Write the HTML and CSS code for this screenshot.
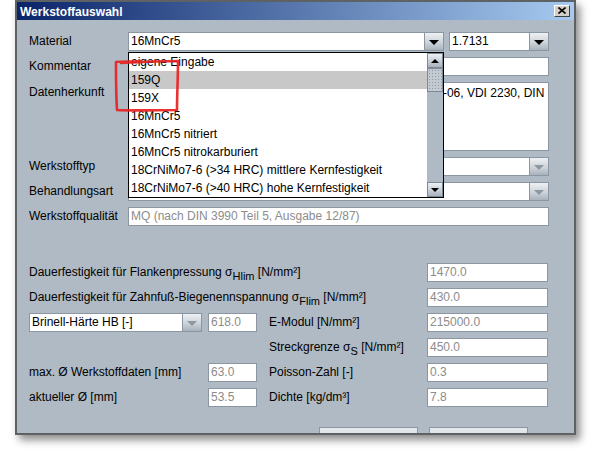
FILE: index.html
```html
<!DOCTYPE html>
<html>
<head>
<meta charset="utf-8">
<link rel="stylesheet" href="styles.css">
</head>
<body>
<div class="window">
  <div class="titlebar">
    <span class="title">Werkstoffauswahl</span>
    <span class="close"><svg width="8" height="7" viewBox="0 0 8 7"><path d="M0.5 0.5 L7.5 6.5 M7.5 0.5 L0.5 6.5" stroke="#000" stroke-width="1.6" fill="none"/></svg></span>
  </div>
  <div class="content">
    <div class="form-upper">
      <div class="lbl">Material</div>
      <div class="row-material">
        <div class="combo combo-main">
          <span class="combo-text">16MnCr5</span>
          <span class="arrow"><i class="tri"></i></span>
          <div class="popup">
            <div class="list">
              <div class="item">eigene Eingabe</div>
              <div class="item selected">159Q</div>
              <div class="item">159X</div>
              <div class="item">16MnCr5</div>
              <div class="item">16MnCr5 nitriert</div>
              <div class="item">16MnCr5 nitrokarburiert</div>
              <div class="item">18CrNiMo7-6 (&gt;34 HRC) mittlere Kernfestigkeit</div>
              <div class="item">18CrNiMo7-6 (&gt;40 HRC) hohe Kernfestigkeit</div>
            </div>
            <div class="scrollbar">
              <div class="sbtn"><i class="tri-up"></i></div>
              <div class="thumb"></div>
              <div class="track"></div>
              <div class="sbtn"><i class="tri-sm"></i></div>
            </div>
          </div>
        </div>
        <div class="combo combo-nr">
          <span class="combo-text">1.7131</span>
          <span class="arrow"><i class="tri"></i></span>
        </div>
      </div>

      <div class="lbl">Kommentar</div>
      <div class="field"></div>

      <div class="lbl lbl-top">Datenherkunft</div>
      <div class="field area">Niemann/Winter, FVA-Informationsblatt 54/17, Stand: 2008-06, VDI 2230, DIN 3990</div>

      <div class="lbl">Werkstofftyp</div>
      <div class="combo disabled">
        <span class="combo-text"></span>
        <span class="arrow"><i class="tri"></i></span>
      </div>

      <div class="lbl">Behandlungsart</div>
      <div class="combo disabled">
        <span class="combo-text"></span>
        <span class="arrow"><i class="tri"></i></span>
      </div>

      <div class="lbl">Werkstoffqualität</div>
      <div class="field dis">MQ (nach DIN 3990 Teil 5, Ausgabe 12/87)</div>
    </div>

    <div class="form-lower">
      <div class="lbl span3">Dauerfestigkeit für Flankenpressung σ<sub>Hlim</sub> [N/mm²]</div>
      <div class="field dis">1470.0</div>

      <div class="lbl span3">Dauerfestigkeit für Zahnfuß-Biegenennspannung σ<sub>Flim</sub> [N/mm²]</div>
      <div class="field dis">430.0</div>

      <div class="combo disabled hb">
        <span class="combo-text">Brinell-Härte HB [-]</span>
        <span class="arrow"><i class="tri"></i></span>
      </div>
      <div class="field dis small">618.0</div>
      <div class="lbl">E-Modul [N/mm²]</div>
      <div class="field dis">215000.0</div>

      <div class="lbl col3">Streckgrenze σ<sub>S</sub> [N/mm²]</div>
      <div class="field dis">450.0</div>

      <div class="lbl">max. Ø Werkstoffdaten [mm]</div>
      <div class="field dis small">63.0</div>
      <div class="lbl">Poisson-Zahl [-]</div>
      <div class="field dis">0.3</div>

      <div class="lbl">aktueller Ø [mm]</div>
      <div class="field dis small">53.5</div>
      <div class="lbl">Dichte [kg/dm³]</div>
      <div class="field dis">7.8</div>
    </div>

    <div class="buttons">
      <div class="btn"></div>
      <div class="btn"></div>
    </div>
  </div>
</div>
<svg class="annotation" width="590" height="451" viewBox="0 0 590 451">
  <path d="M121 63 C140 62 160 61 178 61 C178 78 177 95 177 110 C158 110 137 111 117 110 C116 94 116 78 116 62 C125 61 133 62 141 61" fill="none" stroke="#e8211f" stroke-width="2.6" stroke-linecap="round" stroke-linejoin="round" opacity="0.92"/>
</svg>
</body>
</html>
```

FILE: styles.css
```css
body {
  margin: 0;
  width: 590px;
  height: 451px;
  background: #ffffff;
  font-family: "Liberation Sans", Arial, sans-serif;
  font-size: 12px;
  color: #000;
  overflow: hidden;
}

.window {
  position: relative;
  margin-left: 15px;
  width: 561px;
  height: 435px;
  box-sizing: border-box;
  border: 2px solid #5f6264;
  background: #b0bac4;
  box-shadow: 4px 5px 8px rgba(0, 0, 0, 0.45);
  overflow: hidden;
}

.titlebar {
  height: 18px;
  background: linear-gradient(to right, #0a246a, #a6caf0);
  display: flex;
  align-items: center;
  justify-content: space-between;
  padding: 0 4px 0 3px;
}

.title {
  color: #ffffff;
  font-weight: bold;
  font-size: 12px;
  line-height: 18px;
  padding-top: 1px;
}

.close {
  width: 16px;
  height: 12px;
  box-sizing: border-box;
  background: #d4d0c8;
  border: 1px solid;
  border-color: #ffffff #404040 #404040 #ffffff;
  display: flex;
  align-items: center;
  justify-content: center;
  margin-top: -1px;
}

.close svg { display: block; }

.content {
  padding: 12px 25px 0 12px;
}

.lbl {
  line-height: 19px;
  white-space: nowrap;
}

.lbl sub {
  font-size: 11px;
  vertical-align: -4px;
  line-height: 0;
}

.form-upper {
  display: grid;
  grid-template-columns: 99px 1fr;
  grid-template-rows: 19px 19px 69px 19px 19px 19px;
  row-gap: 6px;
}

.lbl-top { line-height: 19px; padding-top: 1px; }

.row-material {
  display: flex;
  gap: 5px;
}

.field {
  box-sizing: border-box;
  height: 19px;
  border: 1px solid #8a96a2;
  background: #ffffff;
  padding: 0 2px;
  line-height: 17px;
  white-space: nowrap;
  overflow: hidden;
}

.field.dis { color: #8c8c8c; }

.field.area {
  height: 69px;
  white-space: normal;
  padding: 1px 1px 0 2px;
  line-height: 18px;
  color: #000;
}

.combo {
  position: relative;
  box-sizing: border-box;
  height: 19px;
  border: 1px solid #8a96a2;
  background: #ffffff;
  display: flex;
}

.combo-main { flex: 1; }
.combo-nr { width: 100px; }

.combo-text {
  flex: 1;
  padding-left: 2px;
  line-height: 17px;
  white-space: nowrap;
  overflow: hidden;
}

.arrow {
  width: 18px;
  border-left: 1px solid #8a96a2;
  background: linear-gradient(to bottom, #eef1f4, #c9d0d7 60%, #a9b2bb);
  display: flex;
  align-items: center;
  justify-content: center;
}

.tri {
  width: 0;
  height: 0;
  border-left: 5px solid transparent;
  border-right: 5px solid transparent;
  border-top: 5px solid #000;
  margin-top: 1px;
}

.disabled .tri { border-top-color: #8e979f; }

.popup {
  position: absolute;
  left: -1px;
  top: 19px;
  width: calc(100% + 2px);
  height: 146px;
  box-sizing: border-box;
  border: 1px solid #000;
  background: #ffffff;
  display: flex;
  z-index: 5;
}

.list {
  flex: 1;
  display: flex;
  flex-direction: column;
}

.item {
  height: 18px;
  line-height: 18px;
  padding-left: 2px;
  white-space: nowrap;
  overflow: hidden;
}

.item.selected { background: #c8c8c8; }

.scrollbar {
  width: 16px;
  display: flex;
  flex-direction: column;
  background: #b0bac4;
}

.sbtn {
  height: 15px;
  box-sizing: border-box;
  border: 1px solid #7d8995;
  background: linear-gradient(to bottom, #eef1f4, #c4ccd4 60%, #a9b2bb);
  display: flex;
  align-items: center;
  justify-content: center;
}

.tri-up {
  width: 0;
  height: 0;
  border-left: 4px solid transparent;
  border-right: 4px solid transparent;
  border-bottom: 4px solid #000;
}

.tri-sm {
  width: 0;
  height: 0;
  border-left: 4px solid transparent;
  border-right: 4px solid transparent;
  border-top: 4px solid #000;
}

.thumb {
  height: 24px;
  box-sizing: border-box;
  border: 1px solid #7d8995;
  background-color: #c3cad2;
  background-image: radial-gradient(circle, #8d97a2 0.7px, transparent 0.9px);
  background-size: 3px 3px;
}

.track { flex: 1; }

.form-lower {
  margin-top: 37px;
  display: grid;
  grid-template-columns: 179px 61px 158px 121px;
  grid-auto-rows: 19px;
  row-gap: 6px;
}

.span3 { grid-column: 1 / 4; }
.col3 { grid-column: 3; }

.hb { width: 173px; }
.field.small { width: 49px; }

.buttons {
  margin-top: 20px;
  display: flex;
  justify-content: flex-end;
  gap: 11px;
  padding-right: 21px;
}

.btn {
  width: 99px;
  height: 24px;
  box-sizing: border-box;
  border: 1px solid #8a96a2;
  background: linear-gradient(to bottom, #e6eaef, #c7ced6);
}

.annotation {
  position: absolute;
  left: 0;
  top: 0;
  z-index: 10;
  pointer-events: none;
}
```
